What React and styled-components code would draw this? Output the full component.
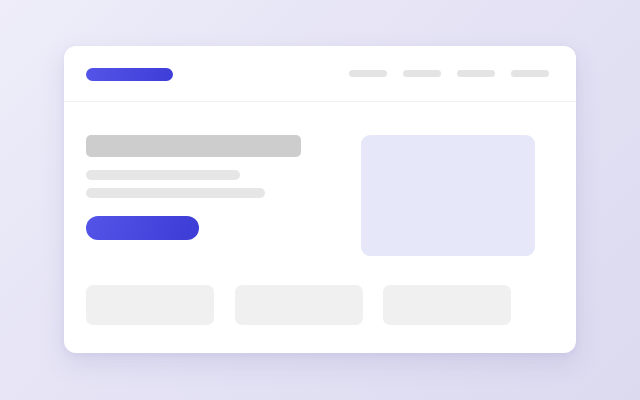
import React from "react";
import styled, { createGlobalStyle } from "styled-components";

const Global = createGlobalStyle`
  html, body { margin: 0; padding: 0; }
  body {
    width: 640px; height: 400px; overflow: hidden;
    font-family: "Inter", "Liberation Sans", sans-serif;
    background: linear-gradient(135deg, #eeedf9 0%, #e4e2f4 50%, #dcdaef 100%);
  }
`;

const Stage = styled.div`
  width: 640px;
  height: 400px;
  padding: 46px 64px 0;
  box-sizing: border-box;
`;

const Card = styled.div`
  width: 512px;
  height: 307px;
  background: #ffffff;
  border-radius: 12px;
  box-shadow: 0 10px 24px rgba(120, 110, 180, 0.16), 0 2px 6px rgba(120, 110, 180, 0.08);
  display: flex;
  flex-direction: column;
  box-sizing: border-box;
`;

const Header = styled.div`
  height: 56px;
  box-sizing: border-box;
  border-bottom: 1px solid #f0f0f3;
  display: flex;
  align-items: center;
  justify-content: space-between;
  padding: 0 27px 0 22px;
`;

const Logo = styled.div`
  width: 87px;
  height: 13px;
  border-radius: 7px;
  background: linear-gradient(100deg, #5454e8, #3e3ed8);
  margin-top: 1px;
`;

const Nav = styled.div`
  display: flex;
  gap: 16px;
`;

const NavItem = styled.div`
  width: 38px;
  height: 7px;
  border-radius: 4px;
  background: #e4e4e4;
`;

const Body = styled.div`
  display: flex;
  padding: 33px 0 0 22px;
  gap: 60px;
`;

const Left = styled.div`
  display: flex;
  flex-direction: column;
  width: 215px;
`;

const Title = styled.div`
  width: 215px;
  height: 22px;
  border-radius: 5px;
  background: #cdcdcd;
  margin-bottom: 13px;
`;

const Line = styled.div`
  width: ${(p) => p.$w}px;
  height: 10px;
  border-radius: 5px;
  background: #e6e6e6;
  margin-bottom: ${(p) => p.$mb}px;
`;

const Button = styled.div`
  width: 113px;
  height: 24px;
  border-radius: 12px;
  background: linear-gradient(110deg, #5454e8, #3c3cd6);
`;

const Media = styled.div`
  width: 174px;
  height: 121px;
  border-radius: 9px;
  background: #e7e7fa;
`;

const Tiles = styled.div`
  display: flex;
  gap: 20.5px;
  padding: 29px 0 0 22px;
`;

const Tile = styled.div`
  width: 128px;
  height: 40px;
  border-radius: 7px;
  background: #f0f0f0;
`;

export default function App() {
  return (
    <>
      <Global />
      <Stage>
        <Card>
          <Header>
            <Logo />
            <Nav>
              <NavItem />
              <NavItem />
              <NavItem />
              <NavItem />
            </Nav>
          </Header>
          <Body>
            <Left>
              <Title />
              <Line $w={154} $mb={8} />
              <Line $w={179} $mb={18} />
              <Button />
            </Left>
            <Media />
          </Body>
          <Tiles>
            <Tile />
            <Tile />
            <Tile />
          </Tiles>
        </Card>
      </Stage>
    </>
  );
}
